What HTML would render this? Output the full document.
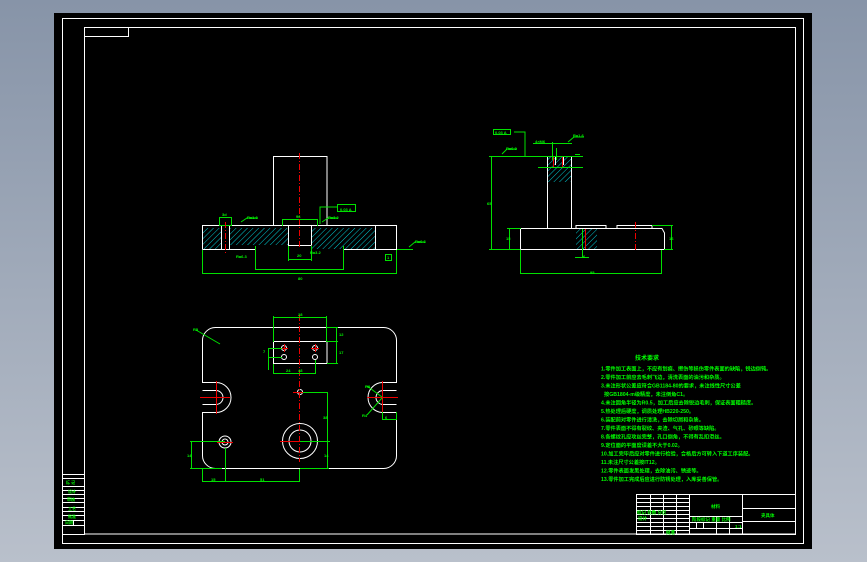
<!DOCTYPE html>
<html><head><meta charset="utf-8"><style>
html,body{margin:0;padding:0;width:867px;height:562px;overflow:hidden;background:linear-gradient(#8794a8,#b9c0cb);}
svg{display:block}
text{font-family:"Liberation Sans","Noto Sans CJK SC",sans-serif;fill:#00ff00;font-weight:bold}
</style></head><body>
<svg width="867" height="562" viewBox="0 0 867 562" xmlns="http://www.w3.org/2000/svg">
<defs>
<pattern id="h" width="4" height="4" patternUnits="userSpaceOnUse" patternTransform="rotate(45)">
<line x1="0" y1="0" x2="0" y2="4" stroke="#00c8d0" stroke-width="1"/>
</pattern>
</defs>
<rect x="54" y="13" width="758" height="536" fill="#000"/>
<g fill="none" stroke="#fff" stroke-width="1">
<rect x="62.5" y="18.5" width="741" height="525"/>
<rect x="84.5" y="27.5" width="711" height="506.5"/>
<rect x="84.5" y="27.5" width="44" height="9"/>
<!-- left strip -->
<rect x="62.5" y="474.5" width="22" height="60"/>
<line x1="62" y1="478.5" x2="84" y2="478.5"/><line x1="62" y1="486.5" x2="84" y2="486.5"/>
<line x1="62" y1="490.5" x2="84" y2="490.5"/><line x1="62" y1="494.5" x2="84" y2="494.5"/>
<line x1="62" y1="498.5" x2="84" y2="498.5"/><line x1="62" y1="502.5" x2="84" y2="502.5"/>
<line x1="62" y1="507.5" x2="84" y2="507.5"/><line x1="62" y1="511.5" x2="84" y2="511.5"/>
<line x1="62" y1="515.5" x2="84" y2="515.5"/><line x1="62" y1="520.5" x2="84" y2="520.5"/>
<line x1="62" y1="525.5" x2="84" y2="525.5"/><line x1="73.5" y1="520" x2="73.5" y2="525"/>
</g>
<g font-size="4">
<text x="66" y="484">标 记</text><text x="68" y="493">设计</text><text x="67" y="501">审核</text><text x="68" y="510">工艺</text><text x="68" y="518">批准</text><text x="65" y="524">日期</text>
</g>

<!-- FRONT VIEW -->
<rect x="202" y="228" width="19" height="21" fill="url(#h)"/>
<rect x="230" y="228" width="58" height="17" fill="url(#h)"/>
<rect x="311" y="228" width="64" height="21" fill="url(#h)"/>
<g fill="none" stroke="#fff" stroke-width="1">
<rect x="273.5" y="156.5" width="53.5" height="69"/>
<polyline points="202.5,249.5 202.5,225.5 396.5,225.5 396.5,249.5 343,249.5"/>
<polyline points="202.5,249.5 255,249.5"/>
<line x1="288.5" y1="226" x2="288.5" y2="245.5"/><line x1="311.5" y1="226" x2="311.5" y2="245.5"/>
<line x1="288" y1="245.5" x2="311" y2="245.5"/>
<line x1="375.5" y1="226" x2="375.5" y2="249.5"/>
<line x1="221.5" y1="226" x2="221.5" y2="249"/><line x1="229.5" y1="226" x2="229.5" y2="249"/>
</g>
<g fill="none" stroke="#00e000" stroke-width="1">
<line x1="202.5" y1="250" x2="202.5" y2="274"/><line x1="396.5" y1="250" x2="396.5" y2="274"/>
<line x1="202" y1="273.5" x2="397" y2="273.5"/>
<line x1="255.5" y1="246" x2="255.5" y2="270"/><line x1="343.5" y1="246" x2="343.5" y2="270"/>
<line x1="255" y1="269.5" x2="344" y2="269.5"/>
<rect x="219.5" y="217.5" width="12" height="8"/>
<line x1="282" y1="219.5" x2="317" y2="219.5"/><line x1="282.5" y1="219" x2="282.5" y2="226"/><line x1="317.5" y1="219" x2="317.5" y2="226"/>
<polyline points="320,224 320,207 337,207"/><rect x="337.5" y="204.5" width="18" height="7"/>
<line x1="288" y1="259.5" x2="311" y2="259.5"/><line x1="288.5" y1="246" x2="288.5" y2="261"/><line x1="311.5" y1="246" x2="311.5" y2="261"/>
<line x1="397" y1="249.5" x2="413" y2="249.5"/><rect x="385.5" y="254.5" width="6" height="6"/>
<polyline points="241,222 247,218 258,218"/><polyline points="322,222 328,218 338,218"/><polyline points="409,247 415,242 425,242"/>
</g>
<line x1="299.5" y1="153" x2="299.5" y2="248" stroke="#e00" stroke-dasharray="6,2,1,2"/>
<line x1="225.5" y1="222" x2="225.5" y2="253" stroke="#e00" stroke-dasharray="6,2,1,2"/>
<g font-size="4">
<text x="222" y="216">3d</text><text x="247" y="219">Ra1.6</text><text x="296" y="218">96</text><text x="340" y="211">0.03 A</text><text x="328" y="219">Ra3.2</text><text x="298" y="280">80</text><text x="297" y="257">20</text><text x="236" y="258">Ra6.3</text><text x="415" y="243">Ra6.3</text><text x="387" y="259">1</text><text x="310" y="254">Ra3.2</text>
</g>

<!-- SIDE VIEW -->
<rect x="547" y="156" width="24" height="26" fill="url(#h)"/>
<rect x="576" y="228" width="21" height="21" fill="url(#h)"/>
<g fill="none" stroke="#fff" stroke-width="1">
<polyline points="547.5,228 547.5,156.5 571.5,156.5 571.5,228"/>
<polyline points="520.5,249.5 520.5,228.5 662,228.5 664.5,233 664.5,249.5 520.5,249.5"/>
<rect x="576" y="225.5" width="30" height="3"/><rect x="617" y="225.5" width="35" height="3"/>
<line x1="555.5" y1="157" x2="555.5" y2="165"/><line x1="563.5" y1="157" x2="563.5" y2="165"/>
</g>
<g fill="none" stroke="#e00"><line x1="553.5" y1="156" x2="553.5" y2="167"/><line x1="562.5" y1="156" x2="562.5" y2="167"/><line x1="585.5" y1="229" x2="585.5" y2="249"/><line x1="635.5" y1="222" x2="635.5" y2="252" stroke-dasharray="6,2,1,2"/></g>
<g fill="none" stroke="#00e000" stroke-width="1">
<line x1="491.5" y1="156" x2="491.5" y2="250"/><line x1="489" y1="156.5" x2="583" y2="156.5"/><line x1="489" y1="249.5" x2="520" y2="249.5"/>
<line x1="509.5" y1="228" x2="509.5" y2="250"/><line x1="507" y1="228.5" x2="521" y2="228.5"/>
<line x1="520.5" y1="250" x2="520.5" y2="274"/><line x1="661.5" y1="250" x2="661.5" y2="274"/><line x1="520" y1="273.5" x2="662" y2="273.5"/>
<line x1="671.5" y1="225" x2="671.5" y2="250"/><line x1="652" y1="225.5" x2="673" y2="225.5"/><line x1="664" y1="249.5" x2="673" y2="249.5"/>
<rect x="493.5" y="129.5" width="17" height="5"/><polyline points="514,132 525,132 525,156"/>
<line x1="533" y1="143.5" x2="572" y2="143.5"/><line x1="552.5" y1="142" x2="552.5" y2="160"/><line x1="556.5" y1="148" x2="556.5" y2="160"/>
<line x1="538" y1="167.5" x2="583" y2="167.5"/><line x1="575" y1="154.5" x2="580" y2="154.5"/>
<line x1="575" y1="257.5" x2="589" y2="257.5"/><line x1="582.5" y1="229" x2="582.5" y2="258"/>
<polyline points="502,154 507,149 517,149"/><polyline points="568,142 574,137 584,137"/>
</g>
<g font-size="4">
<text x="495" y="134">0.03 A</text><text x="506" y="150">Ra6.3</text><text x="535" y="143">4×M6</text><text x="573" y="137">Ra1.6</text><text x="487" y="205">65</text><text x="506" y="240">15</text><text x="669" y="240">16</text><text x="590" y="274">95</text><text x="583" y="258">6</text>
</g>

<!-- TOP VIEW -->
<g fill="none" stroke="#fff" stroke-width="1">
<path d="M216,327.5 H383 A13,13 0 0 1 396.5,341 V382.5 H383 A14.5,14.5 0 0 0 383,412.5 H396.5 V455 A13,13 0 0 1 383,468.5 H216 A13,13 0 0 1 202.5,455 V412.5 H216 A14.5,14.5 0 0 0 216,382.5 H202.5 V341 A13,13 0 0 1 216,327.5 Z"/>
<path d="M202.5,390.5 H216 A7,7 0 0 1 216,404.5 H202.5"/>
<path d="M396.5,390.5 H383 A7,7 0 0 0 383,404.5 H396.5"/>
<rect x="273.5" y="341.5" width="53.5" height="22"/>
<circle cx="284" cy="348" r="2.5"/><circle cx="315" cy="348" r="2.5"/><circle cx="284" cy="357" r="2.5"/><circle cx="315" cy="357" r="2.5"/>
<circle cx="300" cy="392" r="2.5"/>
<circle cx="300" cy="441" r="17.5"/><circle cx="300" cy="441" r="11"/>
<circle cx="225" cy="442" r="6"/><circle cx="225" cy="442" r="3"/>
</g>
<g fill="none" stroke="#e00" stroke-width="1">
<line x1="299.5" y1="315" x2="299.5" y2="462" stroke-dasharray="6,2,1,2"/>
<line x1="200" y1="397.5" x2="230" y2="397.5"/><line x1="216.5" y1="381" x2="216.5" y2="414"/>
<line x1="367" y1="397.5" x2="398" y2="397.5"/><line x1="382.5" y1="381" x2="382.5" y2="414"/>
<line x1="280" y1="348.5" x2="288" y2="348.5"/><line x1="311" y1="348.5" x2="319" y2="348.5"/><line x1="284.5" y1="344" x2="284.5" y2="352"/><line x1="315.5" y1="344" x2="315.5" y2="352"/>
<line x1="293" y1="392.5" x2="307" y2="392.5"/><line x1="280" y1="441.5" x2="320" y2="441.5"/><line x1="217" y1="442.5" x2="233" y2="442.5"/>
</g>
<g fill="none" stroke="#00e000" stroke-width="1">
<line x1="273.5" y1="316" x2="273.5" y2="342"/><line x1="326.5" y1="316" x2="326.5" y2="342"/><line x1="273" y1="317.5" x2="327" y2="317.5"/>
<line x1="327" y1="327.5" x2="338" y2="327.5"/><line x1="327" y1="363.5" x2="338" y2="363.5"/><line x1="336.5" y1="327" x2="336.5" y2="364"/><line x1="327" y1="341.5" x2="338" y2="341.5"/>
<line x1="273.5" y1="364" x2="273.5" y2="374"/><line x1="315.5" y1="360" x2="315.5" y2="374"/><line x1="273" y1="373.5" x2="316" y2="373.5"/>
<line x1="268.5" y1="348" x2="268.5" y2="370"/><line x1="268" y1="348.5" x2="282" y2="348.5"/><line x1="268" y1="357.5" x2="282" y2="357.5"/>
<line x1="303" y1="392.5" x2="328" y2="392.5"/><line x1="327.5" y1="392" x2="327.5" y2="469"/><line x1="300" y1="468.5" x2="329" y2="468.5"/>
<line x1="300" y1="441.5" x2="330" y2="441.5"/>
<line x1="191.5" y1="441" x2="191.5" y2="469"/><line x1="190" y1="441.5" x2="225" y2="441.5"/><line x1="190" y1="468.5" x2="222" y2="468.5"/>
<line x1="202.5" y1="469" x2="202.5" y2="482"/><line x1="299.5" y1="469" x2="299.5" y2="482"/><line x1="202" y1="481.5" x2="300" y2="481.5"/><line x1="225.5" y1="448" x2="225.5" y2="482"/>
<line x1="196" y1="330" x2="220" y2="344"/>
<line x1="367" y1="386" x2="382" y2="397"/><line x1="367" y1="415" x2="382" y2="398"/>
<line x1="382.5" y1="412" x2="382.5" y2="420"/><line x1="396.5" y1="412" x2="396.5" y2="420"/><line x1="382" y1="419.5" x2="397" y2="419.5"/>
</g>
<g font-size="4">
<text x="298" y="316">28</text><text x="339" y="336">12</text><text x="339" y="354">17</text><text x="263" y="353">7</text><text x="286" y="372">24</text><text x="298" y="372">48</text><text x="193" y="331">R5</text><text x="323" y="419">38</text><text x="324" y="457">14</text><text x="187" y="457">14</text><text x="211" y="481">15</text><text x="260" y="481">51</text><text x="365" y="388">R8</text><text x="362" y="417">R4</text><text x="385" y="419">6</text>
</g>

<!-- TECH NOTES -->
<g font-size="5.2">
<text x="635" y="360" font-size="6">技术要求</text>
<text x="601" y="370.5">1.零件加工表面上，不应有划痕、擦伤等损伤零件表面的缺陷，锐边倒钝。</text>
<text x="601" y="379">2.零件加工前应去毛刺飞边，清洗表面的油污和杂质。</text>
<text x="601" y="387.5">3.未注形状公差应符合GB1184-80的要求，未注线性尺寸公差</text>
<text x="604" y="396">按GB1804-m级精度，未注倒角C1。</text>
<text x="601" y="404.5">4.未注圆角半径为R0.5，加工后应去除锐边毛刺，保证表面粗糙度。</text>
<text x="601" y="413">5.热处理后硬度，调质处理HB220-250。</text>
<text x="601" y="421.5">6.装配前对零件进行清洗，去除切屑和杂质。</text>
<text x="601" y="430">7.零件表面不得有裂纹、夹渣、气孔、砂眼等缺陷。</text>
<text x="601" y="438.5">8.各螺纹孔应攻丝完整，孔口倒角，不得有乱扣滑丝。</text>
<text x="601" y="447">9.定位面的平面度误差不大于0.02。</text>
<text x="601" y="455.5">10.加工完毕后应对零件进行检验，合格后方可转入下道工序装配。</text>
<text x="601" y="464">11.未注尺寸公差按IT12。</text>
<text x="601" y="472.5">12.零件表面发黑处理，去除油污、锈迹等。</text>
<text x="601" y="481">13.零件加工完成后应进行防锈处理，入库妥善保管。</text>
</g>

<!-- TITLE BLOCK -->
<g fill="none" stroke="#fff" stroke-width="1">
<rect x="636.5" y="494.5" width="159" height="40"/>
<line x1="689.5" y1="494" x2="689.5" y2="534"/><line x1="742.5" y1="494" x2="742.5" y2="534"/>
<line x1="742" y1="508.5" x2="796" y2="508.5"/><line x1="742" y1="521.5" x2="796" y2="521.5"/>
<line x1="689" y1="516.5" x2="742" y2="516.5"/><line x1="689" y1="522.5" x2="742" y2="522.5"/><line x1="689" y1="528.5" x2="742" y2="528.5"/>
<line x1="716.5" y1="516" x2="716.5" y2="534"/><line x1="729.5" y1="516" x2="729.5" y2="534"/><line x1="696.5" y1="522" x2="696.5" y2="528"/><line x1="703.5" y1="522" x2="703.5" y2="528"/>
<line x1="636" y1="498.5" x2="689" y2="498.5"/><line x1="636" y1="502.5" x2="689" y2="502.5"/><line x1="636" y1="506.5" x2="689" y2="506.5"/>
<line x1="636" y1="510.5" x2="689" y2="510.5"/><line x1="636" y1="514.5" x2="689" y2="514.5"/><line x1="636" y1="518.5" x2="689" y2="518.5"/>
<line x1="636" y1="522.5" x2="689" y2="522.5"/><line x1="636" y1="526.5" x2="689" y2="526.5"/><line x1="636" y1="530.5" x2="689" y2="530.5"/>
<line x1="650.5" y1="494" x2="650.5" y2="534"/><line x1="663.5" y1="494" x2="663.5" y2="534"/><line x1="676.5" y1="494" x2="676.5" y2="534"/>
</g>
<g font-size="4.5">
<text x="711" y="508">材料</text><text x="761" y="517">夹具体</text>
<text x="637" y="514">标记 处数 分区</text><text x="638" y="520">设计</text>
<text x="692" y="521">阶段标记 重量 比例</text><text x="735" y="528">1:1</text><text x="666" y="534">批准</text>
</g>
</svg>
</body></html>
